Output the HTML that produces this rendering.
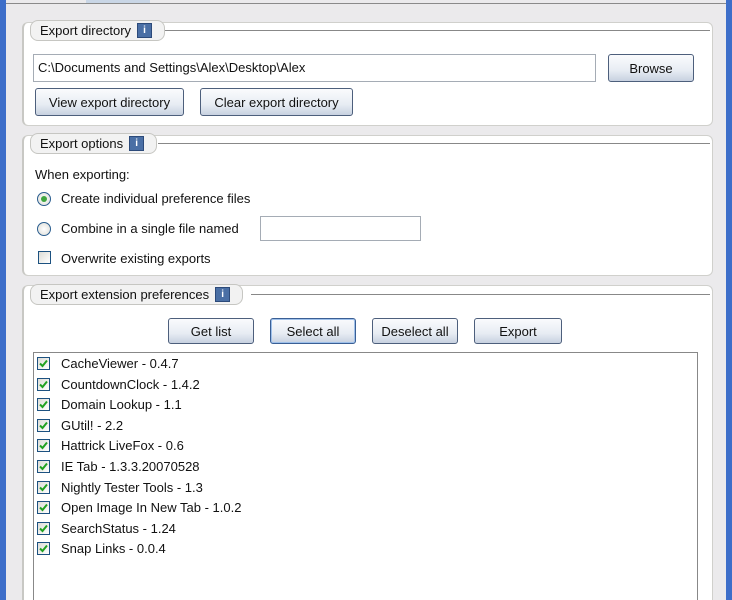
<!DOCTYPE html><html style="overflow:hidden;height:600px"><head><style>
html,body{margin:0;overflow:hidden}
body{width:732px;height:600px;background:#ebeaec;position:relative;font-family:"Liberation Sans","DejaVu Sans",sans-serif;font-size:13px;color:#111}
.a{position:absolute}
.grp{position:absolute;left:22px;width:688px;background:#fff;border:1px solid #d0d0cc;border-radius:6px;border-left:2px solid #c8c8c4}
.cap{position:absolute;background:#f2f2f2;border:1px solid #c6c6c2;border-radius:8px;height:19px;line-height:19px;padding:0 12px 0 9px;white-space:nowrap}
.capline{position:absolute;height:1px;background:#888}
.ib{position:relative;top:-1px;display:inline-block;width:13px;height:13px;background:#4a6fa5;border:1px solid #2c4a7a;color:#fff;font-size:10px;line-height:13px;text-align:center;font-weight:bold;vertical-align:middle;margin-left:6px}
.btn{position:absolute;height:26px;border:1px solid #4d5f7c;border-radius:3px;background:linear-gradient(#fafbfd,#e7ecf3 60%,#c7d1e0);text-align:center;line-height:25px;box-sizing:border-box}
.in{position:absolute;background:#fff;border:1px solid #a5acb5;box-sizing:border-box}
.cb{position:absolute;left:38px;width:13px;height:13px;border:1px solid #1c5180;background:linear-gradient(135deg,#dcdcd6,#fff);box-sizing:border-box}
.li{position:absolute;left:61px}
.rd{position:absolute;left:37px;width:14px;height:14px;border-radius:50%;border:1px solid #2a5d8f;background:radial-gradient(#fff,#dcdcd6);box-sizing:border-box}
</style></head><body>
<div class="a" style="left:0;top:0;width:6px;height:600px;background:#3d6ec9"></div>
<div class="a" style="right:0;top:0;width:6px;height:600px;background:#3d6ec9"></div>
<div class="a" style="left:6px;top:3px;width:720px;height:1px;background:#8a8a8a"></div>
<div class="a" style="left:86px;top:0;width:64px;height:3px;background:#c9d6e6"></div>

<div class="grp" style="top:22px;height:102px"></div>
<div class="capline" style="left:165px;top:30px;width:545px"></div>
<div class="cap" style="left:30px;top:20px">Export directory<span class="ib">i</span></div>
<div class="in" style="left:33px;top:54px;width:563px;height:28px;line-height:26px;padding-left:4px">C:\Documents and Settings\Alex\Desktop\Alex</div>
<div class="btn" style="left:608px;top:54px;width:86px;height:28px;line-height:27px">Browse</div>
<div class="btn" style="left:35px;top:88px;width:149px;height:28px;line-height:27px">View export directory</div>
<div class="btn" style="left:200px;top:88px;width:153px;height:28px;line-height:27px">Clear export directory</div>

<div class="grp" style="top:135px;height:139px"></div>
<div class="capline" style="left:158px;top:143px;width:552px"></div>
<div class="cap" style="left:30px;top:133px">Export options<span class="ib">i</span></div>
<div class="a" style="left:35px;top:167px">When exporting:</div>
<div class="rd" style="top:192px"><div class="a" style="left:3px;top:3px;width:6px;height:6px;border-radius:50%;background:#3fa53f"></div></div>
<div class="li" style="top:191px">Create individual preference files</div>
<div class="rd" style="top:222px"></div>
<div class="li" style="top:221px">Combine in a single file named</div>
<div class="in" style="left:260px;top:216px;width:161px;height:25px"></div>
<div class="cb" style="top:251px"></div>
<div class="li" style="top:251px">Overwrite existing exports</div>

<div class="grp" style="top:285px;height:330px"></div>
<div class="capline" style="left:251px;top:294px;width:459px"></div>
<div class="cap" style="left:30px;top:284px">Export extension preferences<span class="ib">i</span></div>
<div class="btn" style="left:168px;top:318px;width:86px">Get list</div>
<div class="btn" style="left:270px;top:318px;width:86px;border-color:#3a5f95;box-shadow:inset 0 0 0 1px #9ec0ea">Select all</div>
<div class="btn" style="left:372px;top:318px;width:86px">Deselect all</div>
<div class="btn" style="left:474px;top:318px;width:88px">Export</div>
<div class="in" style="left:33px;top:352px;width:665px;height:260px;border-color:#888"></div>
<div id="list"></div>
<script>
var items=["CacheViewer - 0.4.7","CountdownClock - 1.4.2","Domain Lookup - 1.1","GUtil! - 2.2","Hattrick LiveFox - 0.6","IE Tab - 1.3.3.20070528","Nightly Tester Tools - 1.3","Open Image In New Tab - 1.0.2","SearchStatus - 1.24","Snap Links - 0.0.4"];
var h="";items.forEach(function(t,i){var y=356+i*20.6;h+='<div class="cb" style="top:'+(y+1)+'px;left:37px"><svg width="11" height="11" style="position:absolute;left:0;top:0"><path d="M2 5.5L4.5 8L9 2.5" stroke="#21a121" stroke-width="2" fill="none"/></svg></div><div class="li" style="top:'+y+'px">'+t+'</div>';});
document.getElementById("list").innerHTML=h;
</script>
</body></html>
